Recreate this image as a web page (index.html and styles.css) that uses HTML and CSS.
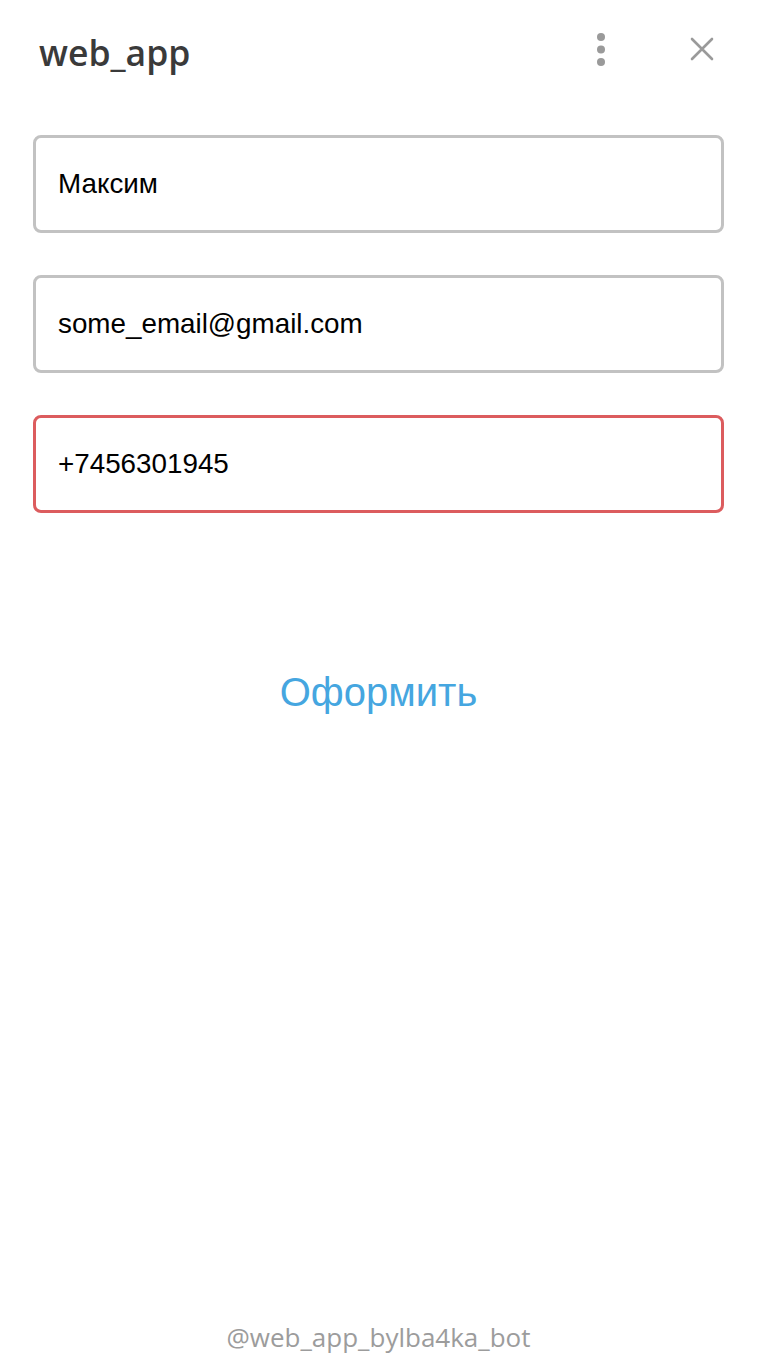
FILE: index.html
```html
<!DOCTYPE html>
<html lang="ru">
<head>
<meta charset="utf-8">
<title>web_app</title>
<link rel="stylesheet" href="styles.css">
</head>
<body>
<div class="app">
  <header class="header">
    <div class="title">web_app</div>
    <div class="actions">
      <svg class="icon-more" width="12" height="36" viewBox="0 0 12 36">
        <circle cx="6" cy="5" r="4" fill="#9a9a9a"/>
        <circle cx="6" cy="17.5" r="4" fill="#9a9a9a"/>
        <circle cx="6" cy="30" r="4" fill="#9a9a9a"/>
      </svg>
      <svg class="icon-close" width="26" height="26" viewBox="0 0 26 26">
        <path d="M3 3 L23 23 M23 3 L3 23" stroke="#9a9a9a" stroke-width="2.6" stroke-linecap="round" fill="none"/>
      </svg>
    </div>
  </header>
  <main class="form">
    <div class="field">Максим</div>
    <div class="field">some_email@gmail.com</div>
    <div class="field field-error">+7456301945</div>
    <div class="submit">Оформить</div>
  </main>
  <footer class="footer">@web_app_bylba4ka_bot</footer>
</div>
</body>
</html>
```
FILE: styles.css
```css
html, body {
  margin: 0;
  padding: 0;
  background: #ffffff;
}
.app {
  width: 757px;
  height: 1369px;
  display: flex;
  flex-direction: column;
  box-sizing: border-box;
}
.header {
  display: flex;
  align-items: center;
  justify-content: space-between;
  height: 104px;
  padding: 0 42px 0 39px;
  box-sizing: border-box;
}
.title {
  font-family: "Open Sans", sans-serif;
  font-weight: 600;
  font-size: 35.5px;
  color: #3a3a3a;
}
.actions {
  display: flex;
  align-items: center;
  gap: 82px;
  margin-top: -6px;
}
.icon-more { display: block; margin-top: 2px; }
.icon-close { display: block; }
.form {
  display: flex;
  flex-direction: column;
  gap: 42px;
  padding: 31px 33px 0 33px;
}
.field {
  height: 98px;
  box-sizing: border-box;
  border: 3px solid #c2c2c2;
  border-radius: 8px;
  padding: 0 22px;
  display: flex;
  align-items: center;
  font-family: "Liberation Sans", Arial, sans-serif;
  font-size: 27.8px;
  color: #000;
}
.field-error {
  border-color: #dc5c5e;
}
.submit {
  margin-top: 115px;
  text-align: center;
  font-family: "Liberation Sans", Arial, sans-serif;
  font-size: 40px;
  color: #45a6e0;
  line-height: 45px;
}
.footer {
  margin-top: auto;
  padding-bottom: 14px;
  line-height: 36px;
  text-align: center;
  font-family: "Open Sans", sans-serif;
  font-size: 26px;
  color: #9c9c9c;
}
```
